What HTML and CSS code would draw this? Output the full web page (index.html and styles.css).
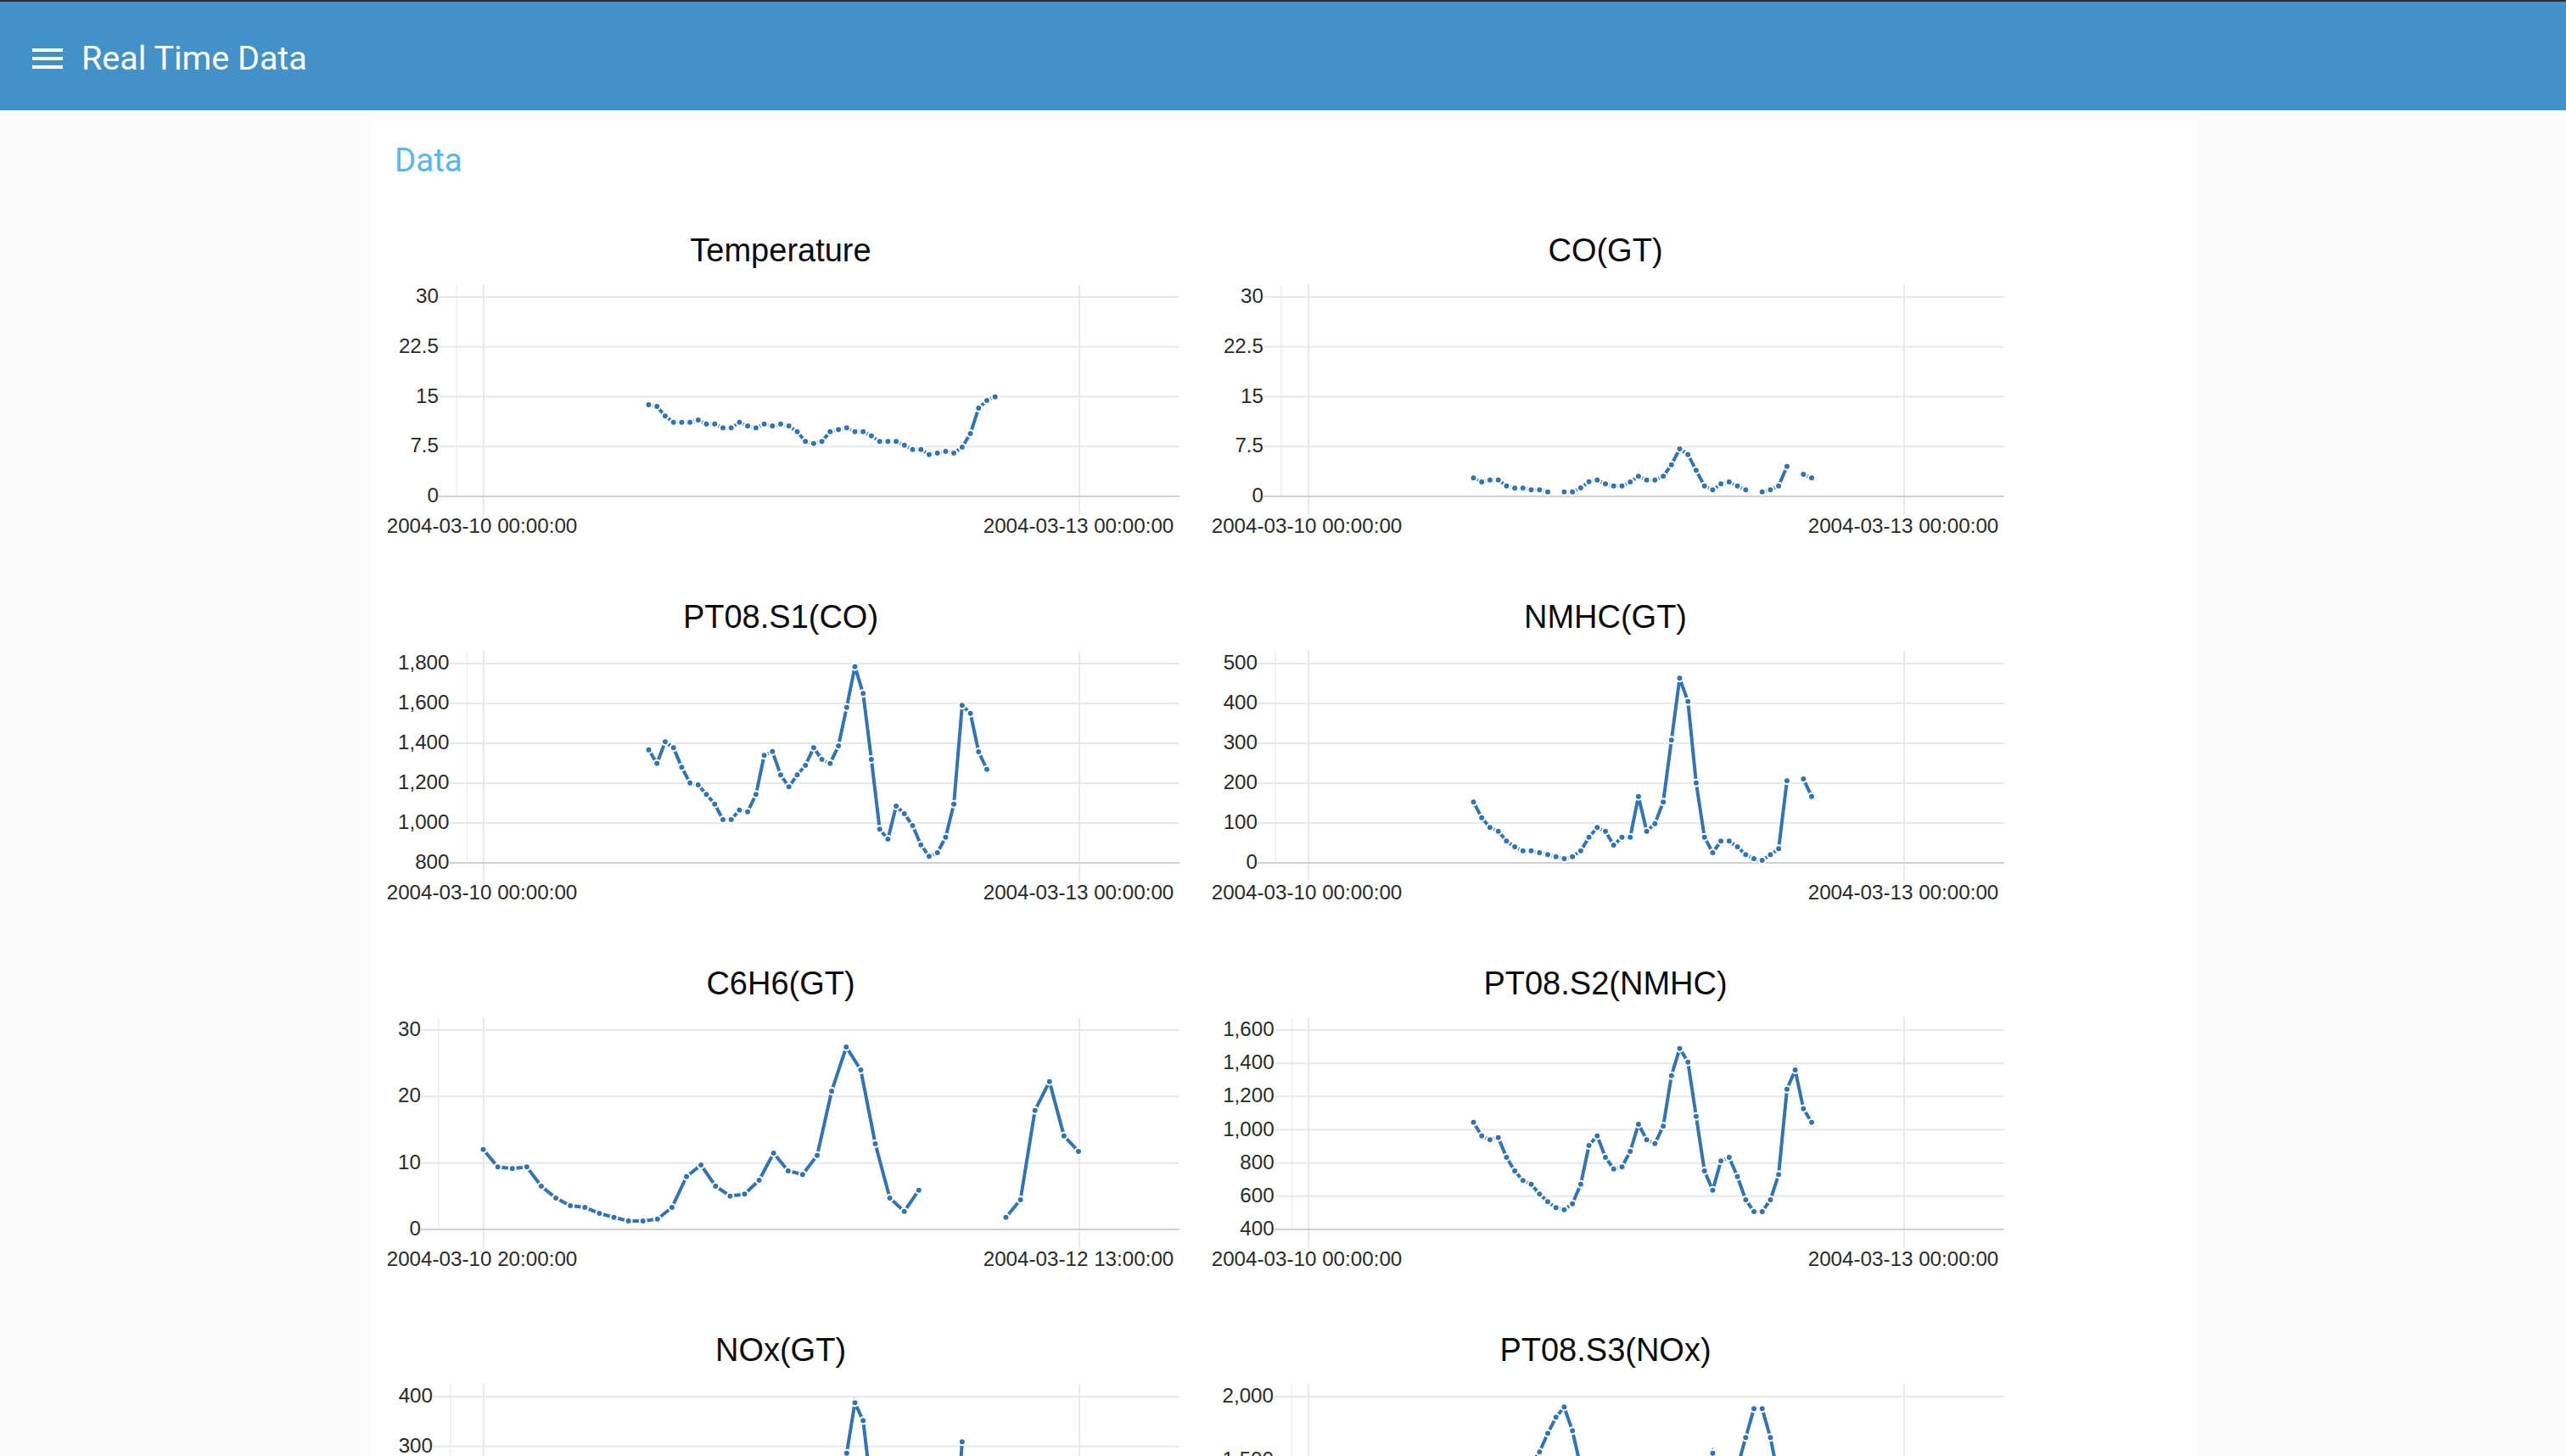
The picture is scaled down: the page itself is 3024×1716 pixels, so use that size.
FILE: index.html
```html
<!DOCTYPE html>
<html lang="en">
<head>
  <meta charset="UTF-8">
  <meta name="viewport" content="width=device-width, initial-scale=1">
  <title>Real Time Data</title>
  <link rel="stylesheet" href="styles.css">
</head>
<body>

<header class="topbar">
  <svg class="menu-icon" viewBox="0 0 24 24" aria-hidden="true">
    <path d="M3 18h18v-2H3v2zm0-5h18v-2H3v2zm0-7v2h18V6H3z"/>
  </svg>
  <span class="topbar-title">Real Time Data</span>
</header>

<main class="card">
  <h2 class="card-title">Data</h2>
  <section class="charts" id="charts"></section>
</main>

<script src="script.js"></script>
</body>
</html>
```

FILE: styles.css
```css
html, body {
  height: 100%;
  overflow: hidden;
}

body {
  margin: 0;
  display: flex;
  flex-direction: column;
  background: #fafafa;
  font-family: Roboto, sans-serif;
}

.topbar {
  flex: none;
  height: 128px;
  box-sizing: content-box;
  display: flex;
  align-items: center;
  gap: 16px;
  padding-left: 32px;
  background: #4292c9;
  border-top: 2px solid #2c2c2e;
  color: white;
}

.menu-icon {
  width: 48px;
  height: 48px;
  margin-top: 6px;
  fill: white;
}

.topbar-title {
  margin-top: 4px;
  font-size: 39.5px;
  font-weight: 400;
}

.card {
  flex: 1;
  width: 2151px;
  margin: 12px 0 0 438px;
  background: white;
}

.card-title {
  margin: 0;
  padding: 24px 0 0 27px;
  height: 128px;
  box-sizing: border-box;
  font-size: 38.5px;
  line-height: 45px;
  font-weight: 400;
  color: #56b6f7;
}

.charts {
  display: grid;
  grid-template-columns: repeat(2, 972px);
  grid-auto-rows: 432px;
}

.chart-title {
  margin: 0;
  padding-right: 8px;
  font-family: "Liberation Sans", Arial, sans-serif;
  font-size: 38px;
  line-height: 50px;
  font-weight: 400;
  text-align: center;
  color: #0a0a0a;
}

.plot {
  display: block;
  width: 972px;
  height: 322px;
  font-family: "Liberation Sans", Arial, sans-serif;
  font-size: 24.2px;
  fill: #2a2a2a;
}

.grid-line {
  stroke: #e8e8e8;
  stroke-width: 2;
}

.axis-line {
  stroke: #cfcfcf;
  stroke-width: 2;
}

.tick-line {
  stroke: #e2e2e2;
  stroke-width: 1.5;
}

.y-line {
  stroke: #ececec;
  stroke-width: 1.5;
}

.series {
  fill: none;
  stroke: #3174b5;
  stroke-width: 4;
}

.dot {
  fill: #3174b5;
  stroke: white;
  stroke-width: 2;
}
```

FILE: script.js
```js
// plot box inside each svg, px
const TOP = 30, BOTTOM = 265, RIGHT = 952;
const TICK_A = 132, TICK_B = 834;
const LABEL_Y = 308;

const hourly = { start: 326.5, step: 9.72 };

// points are read off the plot: px * 3 below the top grid line, _ = no sample
const _ = null;

const charts = [
  {
    name: "Temperature", left: 100, ticks: ["30", "22.5", "15", "7.5", "0"], ...hourly,
    from: "2004-03-10 00:00:00", to: "2004-03-13 00:00:00",
    points: [381, 387, 421, 443, 443, 443, 435, 449, 449, 463, 463, 443, 456, 463, 449, 456, 449, 456, 476, 511, 518, 511, 476, 469, 463, 476, 476, 491, 511, 511, 511, 524, 539, 539, 557, 552, 546, 552, 531, 483, 393, 366, 353]
  },
  {
    name: "CO(GT)", left: 100, ticks: ["30", "22.5", "15", "7.5", "0"], ...hourly,
    from: "2004-03-10 00:00:00", to: "2004-03-13 00:00:00",
    points: [640, 654, 647, 647, 668, 676, 676, 682, 682, 689, _, 689, 689, 675, 653, 647, 661, 668, 668, 654, 634, 647, 647, 634, 593, 537, 557, 613, 668, 682, 661, 654, 668, 682, _, 689, 682, 668, 599, _, 627, 640]
  },
  {
    name: "PT08.S1(CO)", left: 112.5, ticks: ["1,800", "1,600", "1,400", "1,200", "1,000", "800"], ...hourly,
    from: "2004-03-10 00:00:00", to: "2004-03-13 00:00:00",
    points: [305, 353, 277, 298, 367, 422, 429, 463, 497, 552, 552, 518, 524, 463, 325, 311, 394, 436, 394, 360, 298, 339, 353, 291, 155, 11, 106, 339, 586, 621, 504, 531, 573, 641, 682, 669, 614, 497, 148, 176, 312, 374]
  },
  {
    name: "NMHC(GT)", left: 93, ticks: ["500", "400", "300", "200", "100", "0"], ...hourly,
    from: "2004-03-10 00:00:00", to: "2004-03-13 00:00:00",
    points: [490, 545, 580, 593, 628, 648, 662, 662, 669, 676, 683, 690, 683, 662, 614, 580, 593, 642, 614, 614, 470, 593, 566, 490, 271, 52, 134, 422, 614, 669, 628, 628, 648, 676, 690, 696, 676, 655, 415, _, 408, 470]
  },
  {
    name: "C6H6(GT)", left: 79, ticks: ["30", "20", "10", "0"], start: 131.5, step: 17.11,
    from: "2004-03-10 20:00:00", to: "2004-03-12 13:00:00",
    points: [422, 484, 490, 484, 552, 594, 621, 627, 648, 662, 675, 675, 668, 627, 518, 477, 552, 587, 580, 531, 435, 498, 511, 443, 216, 60, 141, 402, 594, 641, 566, _, _, _, _, _, 662, 600, 284, 182, 374, 429]
  },
  {
    name: "PT08.S2(NMHC)", left: 112.7, ticks: ["1,600", "1,400", "1,200", "1,000", "800", "600", "400"], ...hourly,
    from: "2004-03-10 00:00:00", to: "2004-03-13 00:00:00",
    points: [326, 374, 388, 380, 450, 498, 532, 545, 580, 607, 628, 635, 614, 545, 408, 374, 450, 491, 484, 429, 333, 388, 401, 340, 161, 65, 113, 305, 498, 566, 463, 450, 518, 600, 642, 642, 600, 511, 209, 141, 278, 326]
  },
  {
    name: "NOx(GT)", left: 93, ticks: ["400", "300", "200", "100", "0"], ...hourly,
    from: "2004-03-10 00:00:00", to: "2004-03-13 00:00:00",
    points: [450, 480, 510, 530, 560, 590, 610, 620, 630, 640, 650, 655, 650, 620, 560, 480, 500, 560, 520, 500, 440, 520, 480, 400, 200, 22, 85, 330, 560, 620, 580, 590, 610, 640, 660, 670, 650, 560, 160, _, 300, 400]
  },
  {
    name: "PT08.S3(NOx)", left: 112, ticks: ["2,000", "1,500", "1,000", "500"], bottomLabel: 433, ...hourly,
    from: "2004-03-10 00:00:00", to: "2004-03-13 00:00:00",
    points: [560, 500, 470, 470, 440, 380, 300, 240, 196, 130, 73, 37, 121, 250, 360, 440, 400, 330, 370, 400, 470, 430, 420, 470, 600, 660, 620, 400, 300, 200, 300, 290, 250, 145, 43, 43, 145, 290, 560, _, 560, 520]
  }
];

function lineTag(cls, x1, y1, x2, y2) {
  return `<line class="${cls}" x1="${x1}" y1="${y1}" x2="${x2}" y2="${y2}"></line>`;
}

function buildPlot(chart) {
  const tickLeft = chart.left - 21;
  // PT08.S3 axis runs below the fold, its bands are 75px
  const band = chart.bottomLabel ? 75 : (BOTTOM - TOP) / (chart.ticks.length - 1);
  let out = lineTag("y-line", chart.left, TOP - 15, chart.left, BOTTOM);

  [TICK_A, TICK_B].forEach(x => {
    out += lineTag("tick-line", x, TOP - 15, x, BOTTOM + 22);
  });

  chart.ticks.forEach((label, i) => {
    const y = TOP + i * band;
    const last = !chart.bottomLabel && i === chart.ticks.length - 1;
    out += lineTag(last ? "axis-line" : "grid-line", tickLeft, y, RIGHT, y);
    out += `<text x="${tickLeft}" y="${y + 7}" text-anchor="end">${label}</text>`;
  });

  out += `<text x="${TICK_A - 2}" y="${LABEL_Y}" text-anchor="middle">${chart.from}</text>`;
  out += `<text x="${TICK_B - 1}" y="${LABEL_Y}" text-anchor="middle">${chart.to}</text>`;

  // split the line on missing samples
  const at = i => `${(chart.start + i * chart.step).toFixed(1)},${(TOP + chart.points[i] / 3).toFixed(1)}`;
  let run = [];
  let dots = "";
  chart.points.forEach((p, i) => {
    if (p === null) {
      if (run.length) out += `<polyline class="series" points="${run.join(" ")}"></polyline>`;
      run = [];
      return;
    }
    run.push(at(i));
    const [cx, cy] = at(i).split(",");
    dots += `<circle class="dot" cx="${cx}" cy="${cy}" r="4"></circle>`;
  });
  if (run.length) out += `<polyline class="series" points="${run.join(" ")}"></polyline>`;

  return out + dots;
}

function generateCharts() {
  const box = document.getElementById("charts");
  charts.forEach(chart => {
    const item = document.createElement("div");
    item.className = "chart";
    item.innerHTML = `
      <h3 class="chart-title">${chart.name}</h3>
      <svg class="plot" viewBox="0 0 972 322">${buildPlot(chart)}</svg>
    `;
    box.appendChild(item);
  });
}

generateCharts();
```
